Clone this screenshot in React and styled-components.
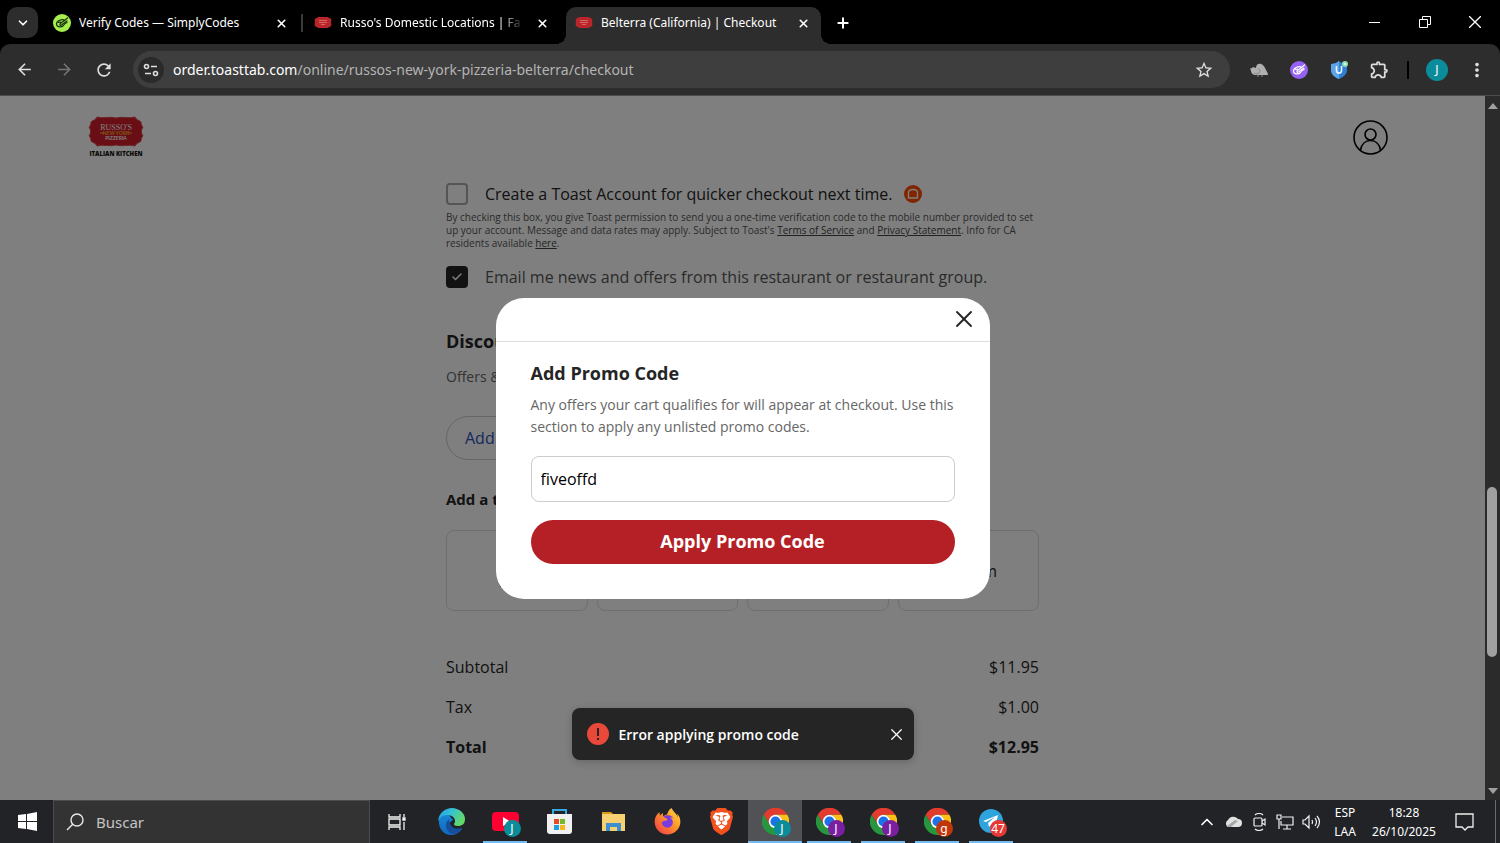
import React from "react";
import styled, { createGlobalStyle, css } from "styled-components";
import { Check, ChevronDown, ChevronUp, Plus, X } from "lucide-react";
import {
  MdArrowBack,
  MdArrowForward,
  MdMoreVert,
  MdOutlineExtension,
  MdRefresh,
  MdStarBorder,
} from "react-icons/md";
import { FaFirefoxBrowser } from "react-icons/fa";
import { SiBrave } from "react-icons/si";

const GlobalStyle = createGlobalStyle`
  *, *::before, *::after {
    box-sizing: border-box;
  }
  body {
    margin: 0;
    background: #000;
  }
  button, input {
    font: inherit;
    color: inherit;
    border: 0;
    margin: 0;
    padding: 0;
    background: none;
  }
  svg {
    display: block;
    flex: none;
  }
`;

const systemFont = css`
  font-family: "Noto Sans", "Open Sans", sans-serif;
`;

const siteFont = css`
  font-family: "Open Sans", "Noto Sans", sans-serif;
`;

const Desktop = styled.div`
  ${systemFont}
  display: flex;
  flex-direction: column;
  height: 100vh;
  overflow: hidden;
`;

/* ---------- browser tabs ---------- */

const TabStrip = styled.header`
  display: flex;
  align-items: flex-end;
  height: 44px;
  flex: none;
  padding-left: 7px;
  background: #000;
  color: #fff;
`;

const TabSearch = styled.button`
  display: grid;
  place-items: center;
  width: 31px;
  height: 31px;
  margin: 0 6px 6px 0;
  border-radius: 10px;
  background: #2d2d2d;
`;

const Tab = styled.div`
  position: relative;
  display: flex;
  align-items: center;
  gap: 8px;
  flex: 0 1 255px;
  min-width: 0;
  height: 37px;
  padding: 0 10px 5px 9px;
  border-radius: 10px 10px 0 0;
  background: ${({ $active }) => ($active ? "#2d2d2d" : "transparent")};

  ${({ $active }) =>
    $active &&
    css`
      &::before,
      &::after {
        content: "";
        position: absolute;
        bottom: 0;
        width: 10px;
        height: 10px;
      }
      &::before {
        right: 100%;
        background: radial-gradient(circle at 0 0, transparent 10px, #2d2d2d 10px);
      }
      &::after {
        left: 100%;
        background: radial-gradient(circle at 100% 0, transparent 10px, #2d2d2d 10px);
      }
    `}
`;

const TabTitle = styled.button`
  flex: 1;
  min-width: 0;
  overflow: hidden;
  white-space: nowrap;
  text-align: left;
  font-size: 12px;
  line-height: 20px;
  ${({ $fade }) =>
    $fade && "mask-image: linear-gradient(90deg, #000 160px, transparent 184px);"}
`;

const TabClose = styled.button`
  display: grid;
  place-items: center;
  width: 16px;
  height: 16px;
`;

const TabDivider = styled.span`
  width: 2px;
  height: 18px;
  margin: 0 2px 12px;
  background: ${({ $hidden }) => ($hidden ? "transparent" : "#3a3a3a")};
`;

const NewTab = styled.button`
  display: grid;
  place-items: center;
  width: 32px;
  height: 32px;
  margin: 0 0 5px 6px;
`;

const WindowButtons = styled.div`
  display: flex;
  align-self: stretch;
  margin-left: auto;
`;

const WindowButton = styled.button`
  display: grid;
  place-items: center;
  width: 50px;
`;

/* ---------- browser toolbar ---------- */

const Toolbar = styled.nav`
  display: flex;
  align-items: center;
  flex: none;
  height: 52px;
  padding: 0 3px 0 4px;
  border-radius: 10px 10px 0 0;
  border-bottom: 1px solid #4b4b4b;
  background: #2d2d2d;
  color: #dedede;
`;

const ToolButton = styled.button`
  display: grid;
  place-items: center;
  flex: none;
  width: 40px;
  height: 36px;
  color: ${({ disabled }) => (disabled ? "#757575" : "inherit")};
`;

const AddressBar = styled.div`
  display: flex;
  align-items: center;
  flex: 1;
  min-width: 0;
  height: 37px;
  margin: 0 9px;
  padding: 0 6px 0 5px;
  border-radius: 19px;
  background: #3e3e3e;
  font-size: 14px;
`;

const SiteInfo = styled.button`
  display: grid;
  place-items: center;
  flex: none;
  width: 26px;
  height: 26px;
  margin-right: 9px;
  border-radius: 50%;
  background: #2a2a2a;
`;

const UrlHost = styled.label`
  color: #fff;
`;

const UrlInput = styled.input`
  flex: 1;
  min-width: 0;
  color: #b4b4b4;
`;

const ToolDivider = styled.span`
  width: 2px;
  height: 18px;
  margin: 0 8px;
  background: #000;
`;

const ProfileAvatar = styled.span`
  display: grid;
  place-items: center;
  width: 22px;
  height: 22px;
  border-radius: 50%;
  background: #0b8c9b;
  color: #fff;
  font-size: 12px;
`;

/* ---------- page ---------- */

const Viewport = styled.div`
  ${siteFont}
  display: flex;
  flex: 1;
  min-height: 0;
`;

const Page = styled.main`
  position: relative;
  flex: 1;
  min-width: 0;
  overflow: hidden;
  background: #fff;
  color: #252525;
  font-size: 16px;
`;

const SiteHeader = styled.header`
  display: flex;
  align-items: center;
  justify-content: space-between;
  height: 82px;
  padding: 0 97px 0 88px;
`;

const AccountButton = styled.button`
  display: block;
`;

const Column = styled.section`
  width: 593px;
  max-width: 100%;
  margin: 0 auto;
`;

const CheckRow = styled.div`
  display: flex;
  align-items: center;
  height: 24px;
  margin-top: ${({ $top }) => $top || 0}px;
  color: ${({ $muted }) => ($muted ? "#555" : "#252525")};
`;

const CheckBoxWrap = styled.span`
  display: grid;
  place-items: center;
  width: 22px;
  height: 22px;
  margin-right: 17px;

  > * {
    grid-area: 1 / 1;
  }
  svg {
    color: #fff;
    pointer-events: none;
  }
`;

const CheckBox = styled.input`
  appearance: none;
  width: 22px;
  height: 22px;
  border: 2px solid #aaa;
  border-radius: 4px;

  &:checked {
    border-color: #252525;
    background: #252525;
  }
`;

const ToastMark = styled.svg`
  margin-left: 12px;
`;

const FinePrint = styled.p`
  margin: 5px 0 0;
  color: #555;
  font-size: 10px;
  line-height: 13px;
  white-space: nowrap;

  a {
    color: #444;
  }
`;

const SectionTitle = styled.h2`
  margin: ${({ $top }) => $top}px 0 0;
  font-size: ${({ $small }) => ($small ? 15 : 18)}px;
  line-height: 24px;
  font-weight: 700;
`;

const SectionText = styled.p`
  margin: 12px 0 0;
  color: #666;
  font-size: 14px;
  line-height: 24px;
`;

const OutlineButton = styled.button`
  height: 44px;
  margin-top: 27px;
  padding: 0 18px;
  border: 1px solid #ccc;
  border-radius: 22px;
  color: #2b4fb9;
`;

const TipGrid = styled.div`
  display: grid;
  grid-template-columns: repeat(4, 1fr);
  gap: 9px;
  margin-top: 19px;
`;

const TipOption = styled.button`
  display: flex;
  flex-direction: column;
  align-items: center;
  justify-content: center;
  height: 81px;
  border: 1px solid #ddd;
  border-radius: 8px;
  line-height: 24px;
`;

const TipAmount = styled.span`
  font-size: 14px;
`;

const Totals = styled.dl`
  display: grid;
  gap: 16px;
  margin: 44px 0 0;
`;

const TotalRow = styled.div`
  display: flex;
  justify-content: space-between;
  line-height: 24px;
  font-weight: ${({ $bold }) => ($bold ? 700 : 400)};

  dd {
    margin: 0;
  }
`;

const Scrim = styled.div`
  position: absolute;
  inset: 0;
  display: grid;
  place-items: center;
  background: rgba(0, 0, 0, 0.5);
`;

const Modal = styled.form`
  width: 494px;
  max-width: 100%;
  border-radius: 28px;
  background: #fff;
`;

const ModalBar = styled.div`
  display: flex;
  align-items: center;
  justify-content: flex-end;
  height: 44px;
  padding-right: 12px;
  border-bottom: 1px solid #ddd;
`;

const ModalBody = styled.div`
  padding: 19px 35px 35px;
`;

const ModalTitle = styled.h1`
  margin: 0;
  font-size: 18px;
  line-height: 24px;
`;

const ModalText = styled.label`
  display: block;
  margin-top: 9px;
  color: #666;
  font-size: 14px;
  line-height: 22px;
`;

const PromoInput = styled.input`
  width: 100%;
  height: 46px;
  margin-top: 18px;
  padding: 0 9px;
  border: 1px solid #ccc;
  border-radius: 8px;
  color: #000;
`;

const ApplyButton = styled.button`
  width: 100%;
  height: 44px;
  margin-top: 18px;
  padding-bottom: 2px;
  border-radius: 22px;
  background: #b42025;
  color: #fff;
  font-size: 18px;
  font-weight: 700;
`;

const IconButton = styled.button`
  display: block;
`;

const Snackbar = styled.div`
  position: absolute;
  bottom: 40px;
  left: 50%;
  transform: translateX(-50%);
  display: flex;
  align-items: center;
  width: 342px;
  height: 52px;
  padding: 0 8px 0 15px;
  border-radius: 8px;
  background: #252525;
  color: #fff;
  font-size: 14px;
  font-weight: 600;
  box-shadow: 0 2px 8px rgba(0, 0, 0, 0.2);

  > svg {
    margin-right: 10px;
  }
  ${IconButton} {
    margin-left: auto;
  }
`;

const Scrollbar = styled.div`
  display: flex;
  flex-direction: column;
  flex: none;
  width: 15px;
  background: #2b2b2b;
  color: #a0a0a0;
`;

const ScrollArrow = styled.button`
  display: grid;
  place-items: center;
  height: 19px;
`;

const ScrollTrack = styled.div`
  display: grid;
  grid-template-rows: 372fr 170fr 124fr;
  flex: 1;
  padding: 0 3px 0 2px;
`;

const ScrollThumb = styled.span`
  grid-row: 2;
  border-radius: 5px;
  background: #a0a0a0;
`;

/* ---------- taskbar ---------- */

const Taskbar = styled.footer`
  display: flex;
  flex: none;
  height: 43px;
  background: #222327;
  color: #fff;
`;

const TaskButton = styled.button`
  display: grid;
  place-items: center;
  flex: none;
  width: 54px;
  background: ${({ $active }) => ($active ? "#505255" : "transparent")};

  ${({ $running, $active }) =>
    $running &&
    css`
      background-image: linear-gradient(#76b9ed, #76b9ed);
      background-size: ${$active ? 54 : 44}px 2px;
      background-position: center bottom;
      background-repeat: no-repeat;
    `}
`;

const SearchBox = styled.label`
  display: flex;
  align-items: center;
  gap: 12px;
  width: 317px;
  margin-left: -1px;
  padding-left: 12px;
  border: 1px solid #4c4c4c;
  border-bottom: 0;
  background: #333;
  font-size: 15px;

  input {
    width: 200px;
  }
  input::placeholder {
    color: #c4c4c4;
    opacity: 1;
  }
`;

const AppIcon = styled.span`
  position: relative;
`;

const AppBadge = styled.span`
  position: absolute;
  right: -2px;
  bottom: -2px;
  display: grid;
  place-items: center;
  width: 17px;
  height: 17px;
  border-radius: 50%;
  background: ${({ $color }) => $color};
  color: #fff;
  font-size: 12px;
  line-height: 17px;
`;

const Tray = styled.div`
  display: flex;
  margin-left: auto;
`;

const TrayButton = styled.button`
  display: grid;
  place-items: center;
  align-content: center;
  width: ${({ $width }) => $width || 26}px;
  font-size: 12px;
  line-height: 19px;
  white-space: nowrap;
`;

const ShowDesktop = styled.button`
  width: 5px;
  margin-left: 9px;
  border-left: 1px solid #6b6b6b;
`;

/* ---------- drawings ---------- */

const PretzelIcon = ({ background, stroke }) => (
  <svg width="18" height="18" viewBox="0 0 18 18">
    <circle cx="9" cy="9" r="9" fill={background} />
    <g fill="none" stroke={stroke} strokeWidth="1.2" strokeLinecap="round" strokeLinejoin="round">
      <path d="M14.500 4 11.500 6.500C9.500 4.500 3.500 6.500 3.500 10c0 3.500 5 3.500 7 1.500L12 9.500l2-1" />
      <path d="M11.500 6.500 8 9c-2 1.500-1 3 .5 2L14 7M5.500 8.500l2-.5" />
    </g>
  </svg>
);

const RussoFavicon = () => (
  <svg width="18" height="18" viewBox="0 0 18 18">
    <path
      d="M4 3h10l1 1c2 0 3 2 2 4.500 1 2.500 0 4.500-2 4.500l-1 1H4l-1-1c-2 0-3-2-2-4.500C0 6 1 4 3 4z"
      fill="#b8252b"
    />
    <path d="M5 6.500h8M5 8.500h8M7 10.500h4" stroke="#d9655f" />
  </svg>
);

const RussoLogo = () => (
  <svg width="56" height="42" viewBox="0 0 56 42">
    <path
      d="M9 1c6 2 13-1 19 1 6-2 13 1 19-1 1 3 4 3 6 5 0 3 1 4 2 5-2 3-2 6 0 9-1 1-2 2-2 5-2 2-5 2-6 5-6-2-13 1-19-1-6 2-13-1-19 1-1-3-4-3-6-5 0-3-1-4-2-5 2-3 2-6 0-9 1-1 2-2 2-5 2-2 5-2 6-5z"
      fill="#d01c28"
      stroke="#dd4a54"
    />
    <g textAnchor="middle" fill="#fff">
      <text x="28" y="14" fontFamily="Liberation Serif" fontSize="8">RUSSO'S</text>
      <text x="28" y="19" fontFamily="Lato" fontSize="5" fontWeight="700" fill="#ffab2e">NEW YORK</text>
      <text x="28" y="24" fontFamily="Lato" fontSize="5" fontWeight="700">PIZZERIA</text>
      <text x="28" y="40" fontFamily="Open Sans" fontSize="6" fontWeight="800" fill="#111">ITALIAN KITCHEN</text>
    </g>
    <path d="M12 17h4M40 17h4" stroke="#ffab2e" />
  </svg>
);

const BirdIcon = () => (
  <svg width="18" height="18" viewBox="0 0 18 18">
    <path d="M0 7c1 1 2 0 3-1 1 0 2 1 3 1 0-3 2-5 5-4 3 1 4 4 5 6 1 2 2 3 2 5H5C3 14 1 12 1 10z" fill="#b0b0b0" />
    <path d="M8 8c2 0 3 2 1 4-1 1-3 1-5 0" fill="none" stroke="#858585" />
    <path d="M8 14v2M12 14v2" stroke="#8a8a8a" />
  </svg>
);

const ShieldIcon = () => (
  <svg width="18" height="20" viewBox="0 0 18 20">
    <path d="M9 1c2 2 5 3 8 3v6c0 4-3 7-8 9-5-2-8-5-8-9V4c3 0 6-1 8-3z" fill="#2f7fd4" />
    <path d="M9 1C7 3 4 4 1 4v6c0 4 3 7 8 9z" fill="#5fa5e6" />
    <path d="M6.500 6v4.500c0 3.500 5 3.500 5 0V6" fill="none" stroke="#e8f4ff" strokeWidth="1.600" />
    <circle cx="15" cy="4" r="3" fill="#8be0b4" />
    <circle cx="15" cy="4" r="1" fill="#fff" />
  </svg>
);

const TuneIcon = () => (
  <svg width="16" height="16" viewBox="0 0 16 16" fill="none" stroke="currentColor" strokeWidth="1.600">
    <circle cx="3.500" cy="4.500" r="2" />
    <path d="M8 4.500h6M2 11.500h6" />
    <circle cx="12.500" cy="11.500" r="2" />
  </svg>
);

const AccountIcon = () => (
  <svg width="36" height="36" viewBox="0 0 36 36" fill="none" stroke="#000" strokeWidth="1.600">
    <circle cx="18.500" cy="18.500" r="16.500" />
    <circle cx="18.500" cy="15.500" r="5.500" />
    <path d="M8.500 31c1-6 5-9.500 10-9.500s9 3.500 10 9.500" />
  </svg>
);

const WindowsLogo = () => (
  <svg width="19" height="19" viewBox="0 0 19 19" fill="#fff">
    <path d="M0 3l8-1v7H0zM9 2l10-2v9H9zM0 10h8v7l-8-1zM9 10h10v9L9 17z" />
  </svg>
);

const SearchGlyph = () => (
  <svg width="18" height="18" viewBox="0 0 18 18" fill="none" stroke="#e8e8e8" strokeWidth="1.400">
    <circle cx="11" cy="7" r="6" />
    <path d="M7 11l-6 6" />
  </svg>
);

const TaskViewIcon = () => (
  <svg width="20" height="20" viewBox="0 0 20 20" fill="none" stroke="#f2f2f2" strokeWidth="1.300">
    <path d="M2 2v3h11V2M2 18v-3h11v3M2 7h11v6H2zM17 2v3M17 10v8" />
    <path d="M16 6h2v2h-2z" fill="#fff" />
  </svg>
);

const EdgeIcon = () => (
  <svg width="27" height="27" viewBox="0 0 27 27">
    <defs>
      <linearGradient id="edgeTop" x1="0" y1="0" x2="1" y2="0.400">
        <stop offset="0" stopColor="#1c9de2" />
        <stop offset="0.500" stopColor="#35c1d6" />
        <stop offset="1" stopColor="#62d96a" />
      </linearGradient>
      <linearGradient id="edgeSide" x1="0" y1="0" x2="0" y2="1">
        <stop offset="0" stopColor="#1786d8" />
        <stop offset="1" stopColor="#1467bd" />
      </linearGradient>
    </defs>
    <path d="M1 11c2-4 6-5 10-4l4 5-4 3c0 5 5 8 13 6-3 4-7 6-11 6C6 27 0 21 1 11z" fill="url(#edgeSide)" />
    <path d="M11 11c-5 4-4 12 3 15 4 0 8-2 10-5 1-1 0-1-1-1-7 2-11-1-12-9z" fill="#144f9c" />
    <path
      d="M0 13C1 5 7 0 14 0c7 0 13 5 13 11 0 5-3 7-7 7-3 0-4-1-4-2s1-1 1-3c0-4-4-6-8-6-4 0-7 2-9 6z"
      fill="url(#edgeTop)"
    />
  </svg>
);

const YouTubeIcon = () => (
  <svg width="27" height="27" viewBox="0 0 27 27">
    <rect y="4" width="27" height="19" rx="4" fill="#ff0033" />
    <path d="M11 9l8 5-8 4z" fill="#fff" />
  </svg>
);

const StoreIcon = () => (
  <svg width="27" height="27" viewBox="0 0 27 27">
    <path d="M7 7V2h13v5" fill="none" stroke="#35a8e0" strokeWidth="2" />
    <path d="M1 6h25v17c0 2-1 3-3 3H4c-2 0-3-1-3-3z" fill="#f0f0f0" />
    <path d="M8 11h5v5H8z" fill="#e84a27" />
    <path d="M14 11h5v5h-5z" fill="#76b82a" />
    <path d="M8 17h5v5H8z" fill="#1ea0e0" />
    <path d="M14 17h5v5h-5z" fill="#f9b51b" />
  </svg>
);

const ExplorerIcon = () => (
  <svg width="27" height="27" viewBox="0 0 27 27">
    <path d="M2 4h9l2 2H2z" fill="#d99a1c" />
    <path d="M2 6h23v17H2z" fill="#f7d171" />
    <path d="M6 23v-8h15v8h-4v-4h-7v4z" fill="#3e8fd0" />
  </svg>
);

const FirefoxIcon = () => (
  <svg width="27" height="27" viewBox="0 0 27 27">
    <defs>
      <linearGradient id="fox" x1="1" y1="0" x2="0" y2="1">
        <stop offset="0" stopColor="#ffe14a" />
        <stop offset="0.450" stopColor="#ff9429" />
        <stop offset="1" stopColor="#f0314f" />
      </linearGradient>
    </defs>
    <circle cx="13" cy="15" r="8" fill="#7a3ce0" />
    <FaFirefoxBrowser size={27} fill="url(#fox)" />
  </svg>
);

const BraveIcon = () => (
  <svg width="27" height="27" viewBox="0 0 27 27">
    <path d="M8 3h11l4 6-2 10-7 6-8-6L4 9z" fill="#fff" />
    <SiBrave size={27} fill="#f4511e" />
  </svg>
);

const ChromeIcon = () => (
  <svg width="27" height="27" viewBox="0 0 48 48">
    <path d="M24 12h21A24 24 0 0 0 3 12l11 18a12 12 0 0 1 10-18z" fill="#e33b2e" />
    <path d="M24 12h21a24 24 0 0 1-21 36l10-18a12 12 0 0 0-10-18z" fill="#fbc116" />
    <path d="M3 12a24 24 0 0 0 21 36l10-18a12 12 0 0 1-20 0z" fill="#26963f" />
    <circle cx="24" cy="24" r="12" fill="#fff" />
    <circle cx="24" cy="24" r="9" fill="#1a73e8" />
  </svg>
);

const TelegramIcon = () => (
  <svg width="27" height="27" viewBox="0 0 27 27">
    <circle cx="13" cy="13" r="12" fill="#2fa3dc" />
    <path d="M5 13l15-6-3 13-4-3-2 2-1-4 7-6-9 5z" fill="#fff" />
  </svg>
);

const CloudIcon = () => (
  <svg width="18" height="13" viewBox="0 0 18 13">
    <path d="M4 12a4 4 0 0 1 0-7 6 6 0 0 1 10-1 4 4 0 0 1 0 8z" fill="#e2e2e2" />
    <path d="M3 11l8-6 3 1-7 6H4z" fill="#a8a8a8" />
  </svg>
);

const MeetIcon = () => (
  <svg width="14" height="18" viewBox="0 0 14 18" fill="none" stroke="#f0f0f0" strokeWidth="1.200">
    <rect x="2" y="5" width="8" height="8" rx="1" />
    <path d="M10 8l3-2v6l-3-2M3 2c2-2 6-2 8 0M3 16c2 2 6 2 8 0" />
  </svg>
);

const NetworkIcon = () => (
  <svg width="18" height="16" viewBox="0 0 18 16" fill="none" stroke="#f0f0f0" strokeWidth="1.200">
    <path d="M6 3h11v8H5V7M11 11v4M7 15h8M1 1h4v4H1zM3 5v10" />
  </svg>
);

const VolumeIcon = () => (
  <svg width="19" height="16" viewBox="0 0 19 16" fill="none" stroke="#f0f0f0" strokeWidth="1.200">
    <path d="M1 6h2l4-4v12l-4-4H1zM10 6q1 2 0 4M13 4q3 4 0 8M15 2q5 6 0 12" />
  </svg>
);

const NotificationIcon = () => (
  <svg width="19" height="19" viewBox="0 0 19 19" fill="none" stroke="#f0f0f0" strokeWidth="1.300">
    <path d="M1 2h17v13h-5l-3 3-3-3H1z" />
  </svg>
);

/* ---------- data ---------- */

const tabs = [
  { title: "Verify Codes — SimplyCodes", icon: <PretzelIcon background="#a5ee4e" stroke="#16300a" /> },
  { title: "Russo's Domestic Locations | Fa", icon: <RussoFavicon />, fade: true },
  { title: "Belterra (California) | Checkout", icon: <RussoFavicon />, active: true },
];

const tips = [
  { label: "10%", amount: "$1.20" },
  { label: "15%", amount: "$1.79" },
  { label: "20%", amount: "$2.39" },
  { label: "Custom" },
];

const totals = [
  { label: "Subtotal", value: "$11.95" },
  { label: "Tax", value: "$1.00" },
  { label: "Total", value: "$12.95", bold: true },
];

const apps = [
  { name: "Edge", icon: <EdgeIcon /> },
  { name: "YouTube", icon: <YouTubeIcon />, badge: "J", color: "#0b8c9b", running: true },
  { name: "Store", icon: <StoreIcon /> },
  { name: "Explorer", icon: <ExplorerIcon /> },
  { name: "Firefox", icon: <FirefoxIcon /> },
  { name: "Brave", icon: <BraveIcon /> },
  { name: "Chrome 1", icon: <ChromeIcon />, badge: "J", color: "#0b8c9b", running: true, active: true },
  { name: "Chrome 2", icon: <ChromeIcon />, badge: "J", color: "#7b1fa2", running: true },
  { name: "Chrome 3", icon: <ChromeIcon />, badge: "J", color: "#7b1fa2", running: true },
  { name: "Chrome 4", icon: <ChromeIcon />, badge: "g", color: "#bf360c", running: true },
  { name: "Telegram", icon: <TelegramIcon />, badge: "47", color: "#e53935", running: true },
];

/* ---------- sections ---------- */

const BrowserTabs = () => (
  <TabStrip>
    <TabSearch aria-label="Search tabs">
      <ChevronDown size={14} strokeWidth={3} />
    </TabSearch>
    {tabs.map(({ title, icon, fade, active }, i) => (
      <React.Fragment key={title}>
        {i > 0 && <TabDivider $hidden={active} />}
        <Tab $active={active}>
          {icon}
          <TabTitle $fade={fade}>{title}</TabTitle>
          <TabClose aria-label="Close tab">
            <X size={13} strokeWidth={3} />
          </TabClose>
        </Tab>
      </React.Fragment>
    ))}
    <NewTab aria-label="New tab">
      <Plus size={16} strokeWidth={3} />
    </NewTab>
    <WindowButtons>
      <WindowButton aria-label="Minimize">
        <svg width="12" height="12" viewBox="0 0 12 12" stroke="#fff">
          <path d="M0 6.500h11" />
        </svg>
      </WindowButton>
      <WindowButton aria-label="Restore">
        <svg width="12" height="12" viewBox="0 0 12 12" fill="none" stroke="#fff">
          <path d="M.5 3.500h8v8h-8zM3.500 3.500v-3h8v8h-3" />
        </svg>
      </WindowButton>
      <WindowButton aria-label="Close">
        <svg width="12" height="12" viewBox="0 0 12 12" stroke="#fff" strokeWidth="1.300">
          <path d="M0 0l12 12M12 0L0 12" />
        </svg>
      </WindowButton>
    </WindowButtons>
  </TabStrip>
);

const BrowserToolbar = () => (
  <Toolbar>
    <ToolButton aria-label="Back">
      <MdArrowBack size={19} />
    </ToolButton>
    <ToolButton aria-label="Forward" disabled>
      <MdArrowForward size={19} />
    </ToolButton>
    <ToolButton aria-label="Reload">
      <MdRefresh size={20} />
    </ToolButton>
    <AddressBar>
      <SiteInfo aria-label="Site information">
        <TuneIcon />
      </SiteInfo>
      <UrlHost htmlFor="url">order.toasttab.com</UrlHost>
      <UrlInput id="url" defaultValue="/online/russos-new-york-pizzeria-belterra/checkout" />
      <ToolButton aria-label="Bookmark">
        <MdStarBorder size={20} />
      </ToolButton>
    </AddressBar>
    <ToolButton aria-label="Bird extension">
      <BirdIcon />
    </ToolButton>
    <ToolButton aria-label="SimplyCodes">
      <PretzelIcon background="#9562f5" stroke="#fff" />
    </ToolButton>
    <ToolButton aria-label="Shield extension">
      <ShieldIcon />
    </ToolButton>
    <ToolButton aria-label="Extensions">
      <MdOutlineExtension size={21} />
    </ToolButton>
    <ToolDivider />
    <ToolButton aria-label="Profile">
      <ProfileAvatar>J</ProfileAvatar>
    </ToolButton>
    <ToolButton aria-label="Menu">
      <MdMoreVert size={22} />
    </ToolButton>
  </Toolbar>
);

const CheckoutContent = () => (
  <>
    <SiteHeader>
      <RussoLogo />
      <AccountButton aria-label="Account">
        <AccountIcon />
      </AccountButton>
    </SiteHeader>
    <Column>
      <CheckRow $top={4}>
        <CheckBoxWrap>
          <CheckBox type="checkbox" id="account" />
        </CheckBoxWrap>
        <label htmlFor="account">Create a Toast Account for quicker checkout next time.</label>
        <ToastMark width="18" height="18" viewBox="0 0 18 18">
          <circle cx="9" cy="9" r="9" fill="#ff4c00" />
          <path
            d="M4.500 13V8.500C4 6 6 4.500 9 4.500s5 1.500 4.500 4V13z"
            fill="none"
            stroke="#fff"
            strokeWidth="1.400"
            strokeLinejoin="round"
          />
        </ToastMark>
      </CheckRow>
      <FinePrint>
        By checking this box, you give Toast permission to send you a one-time verification code to the mobile
        number provided to set
        <br />
        up your account. Message and data rates may apply. Subject to Toast's{" "}
        <a href="#terms">Terms of Service</a> and <a href="#privacy">Privacy Statement</a>. Info for CA
        <br />
        residents available <a href="#info">here</a>.
      </FinePrint>
      <CheckRow $top={15} $muted>
        <CheckBoxWrap>
          <CheckBox type="checkbox" id="news" defaultChecked />
          <Check size={12} strokeWidth={3} />
        </CheckBoxWrap>
        <label htmlFor="news">Email me news and offers from this restaurant or restaurant group.</label>
      </CheckRow>
      <SectionTitle $top={40}>Discounts</SectionTitle>
      <SectionText>Offers &amp; promo codes</SectionText>
      <OutlineButton>Add promo code</OutlineButton>
      <SectionTitle $top={27} $small>
        Add a tip
      </SectionTitle>
      <TipGrid>
        {tips.map(({ label, amount }) => (
          <TipOption key={label}>
            <span>{label}</span>
            {amount && <TipAmount>{amount}</TipAmount>}
          </TipOption>
        ))}
      </TipGrid>
      <Totals>
        {totals.map(({ label, value, bold }) => (
          <TotalRow key={label} $bold={bold}>
            <dt>{label}</dt>
            <dd>{value}</dd>
          </TotalRow>
        ))}
      </Totals>
    </Column>
  </>
);

const PromoModal = () => (
  <Modal onSubmit={(e) => e.preventDefault()}>
    <ModalBar>
      <IconButton type="button" aria-label="Close dialog">
        <X size={28} strokeWidth={1.6} />
      </IconButton>
    </ModalBar>
    <ModalBody>
      <ModalTitle>Add Promo Code</ModalTitle>
      <ModalText htmlFor="promo">
        Any offers your cart qualifies for will appear at checkout. Use this section to apply any unlisted promo
        codes.
      </ModalText>
      <PromoInput id="promo" defaultValue="fiveoffd" />
      <ApplyButton>Apply Promo Code</ApplyButton>
    </ModalBody>
  </Modal>
);

const ErrorSnackbar = () => (
  <Snackbar role="alert">
    <svg width="22" height="22" viewBox="0 0 22 22">
      <circle cx="11" cy="11" r="11" fill="#e8493a" />
      <path d="M11 5v8M11 15v2" stroke="#252525" strokeWidth="2" />
    </svg>
    Error applying promo code
    <IconButton aria-label="Dismiss">
      <X size={19} strokeWidth={1.6} />
    </IconButton>
  </Snackbar>
);

const PageScrollbar = () => (
  <Scrollbar>
    <ScrollArrow aria-label="Scroll up">
      <svg width="10" height="6" viewBox="0 0 10 6" fill="currentColor">
        <path d="M0 6l5-6 5 6z" />
      </svg>
    </ScrollArrow>
    <ScrollTrack>
      <ScrollThumb />
    </ScrollTrack>
    <ScrollArrow aria-label="Scroll down">
      <svg width="10" height="6" viewBox="0 0 10 6" fill="currentColor">
        <path d="M0 0l5 6 5-6z" />
      </svg>
    </ScrollArrow>
  </Scrollbar>
);

const WindowsTaskbar = () => (
  <Taskbar>
    <TaskButton aria-label="Start">
      <WindowsLogo />
    </TaskButton>
    <SearchBox>
      <SearchGlyph />
      <input placeholder="Buscar" />
    </SearchBox>
    <TaskButton aria-label="Task view">
      <TaskViewIcon />
    </TaskButton>
    {apps.map(({ name, icon, badge, color, running, active }) => (
      <TaskButton key={name} aria-label={name} $running={running} $active={active}>
        <AppIcon>
          {icon}
          {badge && <AppBadge $color={color}>{badge}</AppBadge>}
        </AppIcon>
      </TaskButton>
    ))}
    <Tray>
      <TrayButton aria-label="Hidden icons">
        <ChevronUp size={20} strokeWidth={2} />
      </TrayButton>
      <TrayButton aria-label="OneDrive">
        <CloudIcon />
      </TrayButton>
      <TrayButton aria-label="Meet now">
        <MeetIcon />
      </TrayButton>
      <TrayButton aria-label="Network">
        <NetworkIcon />
      </TrayButton>
      <TrayButton aria-label="Volume">
        <VolumeIcon />
      </TrayButton>
      <TrayButton $width={42}>
        <span>ESP</span>
        <span>LAA</span>
      </TrayButton>
      <TrayButton $width={76}>
        <span>18:28</span>
        <span>26/10/2025</span>
      </TrayButton>
      <TrayButton $width={44} aria-label="Notifications">
        <NotificationIcon />
      </TrayButton>
      <ShowDesktop aria-label="Show desktop" />
    </Tray>
  </Taskbar>
);

const App = () => (
  <>
    <GlobalStyle />
    <Desktop>
      <BrowserTabs />
      <BrowserToolbar />
      <Viewport>
        <Page>
          <CheckoutContent />
          <Scrim>
            <PromoModal />
          </Scrim>
          <ErrorSnackbar />
        </Page>
        <PageScrollbar />
      </Viewport>
      <WindowsTaskbar />
    </Desktop>
  </>
);

export default App;
